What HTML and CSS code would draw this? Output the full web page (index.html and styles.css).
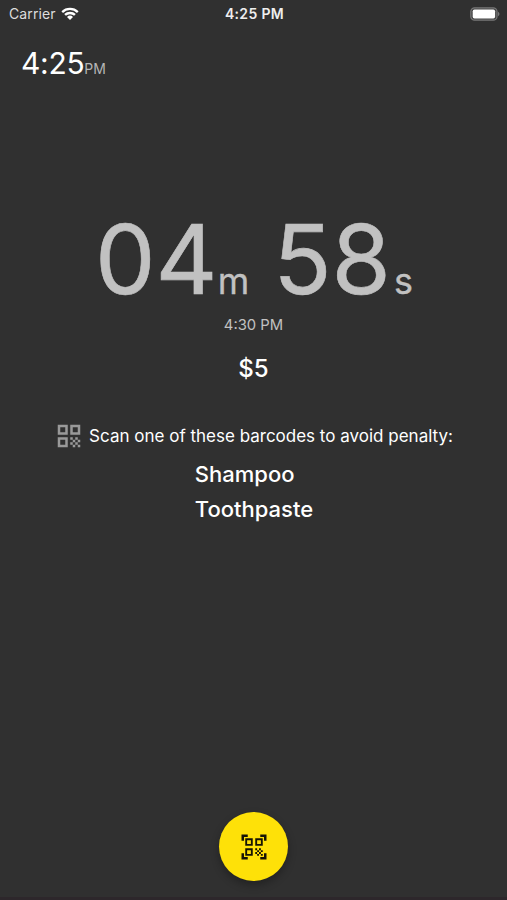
FILE: index.html
```html
<!DOCTYPE html>
<html lang="en">
<head>
    <meta charset="UTF-8">
    <meta name="viewport" content="width=device-width, initial-scale=1.0">
    <title>Alarm</title>
    <link rel="stylesheet" href="styles.css">
</head>
<body>
    <header class="status-bar">
        <div class="carrier">
            <span>Carrier</span>
            <svg class="wifi" viewBox="0 0 18 13">
                <path d="M0.4 4.2a12.4 12.4 0 0 1 17.2 0l-1.6 1.7a10 10 0 0 0-14 0z"/>
                <path d="M3.2 7.1a8.3 8.3 0 0 1 11.6 0l-1.7 1.7a5.9 5.9 0 0 0-8.2 0z"/>
                <path d="M6 10a4.3 4.3 0 0 1 6 0l-3 3z"/>
            </svg>
        </div>
        <div class="status-time">4:25 PM</div>
        <div class="battery">
            <svg viewBox="0 0 30 14">
                <rect x="0.8" y="0.8" width="26.2" height="12.4" rx="3.8" fill="#444" stroke="#777" stroke-width="1.2"/>
                <rect x="2.7" y="2.5" width="22.4" height="9" rx="1.8" fill="#fff"/>
                <path d="M28 4.8c2 .8 2 3.6 0 4.400z" fill="#777"/>
            </svg>
        </div>
    </header>
    <div class="clock">4:25<span class="clock-period">PM</span></div>
    <main>
        <div class="countdown">
            <span class="digits">04</span><span class="unit unit-min">m</span>
            <span class="digits">58</span><span class="unit unit-sec">s</span>
        </div>
        <div class="alarm-time">4:30 PM</div>
        <div class="penalty">$5</div>
        <div class="scan-hint">
            <svg class="qr-icon" viewBox="0 0 24 24">
                <path d="M3 11h8V3H3zM5 5h4v4H5zM3 21h8v-8H3zM5 15h4v4H5zM13 3v8h8V3zM19 9h-4V5h4zM19 19h2v2h-2zM13 13h2v2h-2zM15 15h2v2h-2zM13 17h2v2h-2zM15 19h2v2h-2zM17 17h2v2h-2zM17 13h2v2h-2zM19 15h2v2h-2z" fill-rule="evenodd"/>
            </svg>
            <span>Scan one of these barcodes to avoid penalty:</span>
        </div>
        <ul class="barcodes">
            <li>Shampoo</li>
            <li>Toothpaste</li>
        </ul>
    </main>
    <footer>
        <button class="scan-button" aria-label="Scan">
            <svg viewBox="0 0 24 24">
                <path d="M5 5h6v6H5zM6.500 6.500v3h3v-3zM5 13h6v6H5zM6.500 14.500v3h3v-3zM13 5h6v6h-6zM14.500 6.500v3h3v-3zM13 13h1.500v1.500H13zM14.500 14.500H16V16h-1.500zM16 13h1.500v1.500H16zM13 16h1.500v1.500H13zM14.500 17.500H16V19h-1.500zM16 16h1.500v1.500H16zM17.500 14.500H19V16h-1.500zM17.500 17.500H19V19h-1.500zM22 7h-2V4h-3V2h5zM22 22v-5h-2v3h-3v2zM2 22h5v-2H4v-3H2zM2 2v5h2V4h3V2z" fill-rule="evenodd"/>
            </svg>
        </button>
    </footer>
</body>
</html>
```

FILE: styles.css
```css
* {
    box-sizing: border-box;
}
body {
    font-family: Inter, Roboto, sans-serif;
    background: #303030;
    color: #fff;
    margin: 0;
    height: 100vh;
    display: flex;
    flex-direction: column;
    overflow: hidden;
}
.status-bar {
    display: grid;
    grid-template-columns: 1fr auto 1fr;
    align-items: center;
    height: 26px;
    padding: 0 7px 0 9px;
    font-size: 14px;
}
.carrier {
    display: flex;
    align-items: center;
    gap: 5px;
    color: #ddd;
    letter-spacing: 0.1px;
}
.wifi {
    width: 18px;
    height: 13px;
    fill: #fff;
}
.status-time {
    font-weight: 600;
    letter-spacing: 0.35px;
    color: #eee;
}
.battery {
    display: flex;
    justify-content: flex-end;
    padding-top: 1px;
}
.battery svg {
    width: 30px;
    height: 14px;
}
.clock {
    height: 44px;
    margin-top: 15px;
    padding-left: 21px;
    font-size: 30px;
    line-height: 44px;
    letter-spacing: -0.3px;
}
.clock-period {
    font-size: 14px;
    letter-spacing: 0;
    color: #b5b5b5;
}
main {
    flex: 1;
    display: flex;
    flex-direction: column;
    align-items: center;
}
.countdown {
    display: flex;
    align-items: baseline;
    height: 116px;
    margin-top: 116px;
    padding-left: 1px;
    line-height: 116px;
    color: #c1c1c1;
}
.digits {
    font-size: 96px;
    -webkit-text-stroke: 0.6px #c1c1c1;
}
.unit {
    font-size: 36px;
    -webkit-text-stroke: 0.3px #c1c1c1;
}
.unit-min {
    margin-right: 24px;
}
.unit-sec {
    margin-left: 3px;
}
.alarm-time {
    margin-top: -2px;
    font-size: 14.8px;
    line-height: 20px;
    color: #c1c1c1;
}
.penalty {
    margin-top: 19px;
    font-size: 24px;
    font-weight: 500;
    line-height: 30px;
}
.scan-hint {
    display: flex;
    align-items: center;
    gap: 5px;
    height: 30px;
    margin-top: 37px;
    font-size: 17px;
    white-space: nowrap;
}
.qr-icon {
    width: 30px;
    height: 30px;
    fill: #999;
}
.barcodes {
    list-style: none;
    margin: 6px 0 0;
    padding: 0 0 0 1px;
    font-size: 22px;
    font-weight: 500;
    line-height: 35px;
}
footer {
    display: flex;
    justify-content: center;
    align-items: flex-start;
    height: 88px;
    border-bottom: 3px solid #2d272b;
}
.scan-button {
    display: flex;
    align-items: center;
    justify-content: center;
    width: 69px;
    height: 69px;
    padding: 0;
    border: none;
    border-radius: 50%;
    background: #fee108;
    box-shadow: 0 4px 8px rgba(0, 0, 0, 0.3);
}
.scan-button svg {
    width: 30px;
    height: 30px;
    fill: #161405;
}
```
